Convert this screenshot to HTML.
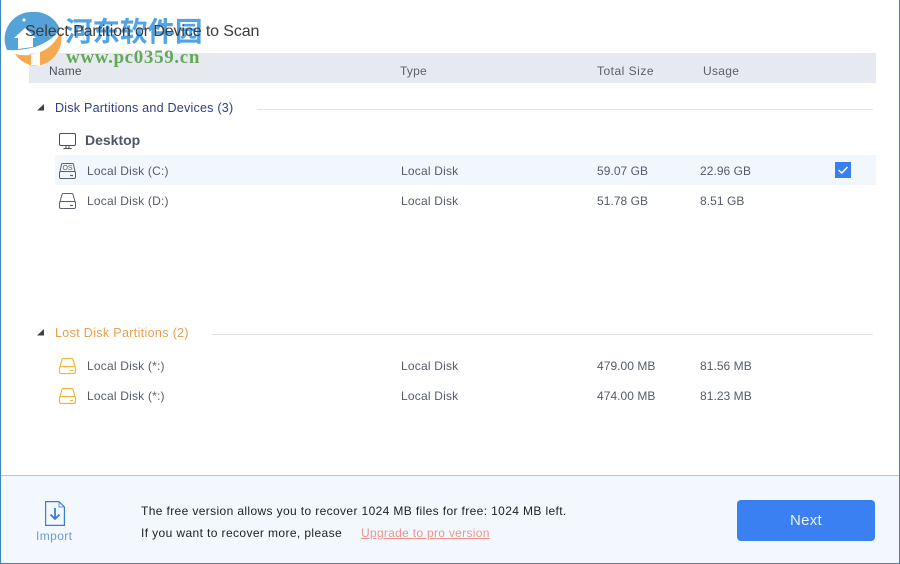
<!DOCTYPE html>
<html>
<head>
<meta charset="utf-8">
<style>
html,body{margin:0;padding:0;background:#fff}
#p{position:relative;width:900px;height:564px;overflow:hidden;background:#fff;font-family:"Liberation Sans","Noto Sans CJK SC",sans-serif}
.t{position:absolute;white-space:nowrap;font-size:12px;line-height:14px;color:#555b6b;letter-spacing:.2px}
.n{letter-spacing:.05px}
.h{font-size:12.6px;top:101px;letter-spacing:.2px}
.c{top:64px;color:#5a5f6b}
.b{position:absolute;background:#e6e9f0}
svg{position:absolute;overflow:visible}
</style>
</head>
<body>
<div id="p">
<div class="b" style="left:29px;top:53px;width:847px;height:30px"></div>
<div class="b" style="left:55px;top:155px;width:821px;height:30px;background:#f2f7fe"></div>
<div class="b" style="left:257px;top:109px;width:616px;height:1px;background:#e2e4e8"></div>
<div class="b" style="left:212px;top:334px;width:661px;height:1px;background:#e2e4e8"></div>

<svg style="left:0;top:0" width="70" height="70" viewBox="0 0 70 70">
<path d="M7 50A27 27 0 0 1 33 12A27 27 0 0 1 60 29Q52 41 35 47Q20 51 7 50Z" fill="#55a2d9"/>
<path d="M15 54Q27 57 38 53Q52 48 59 35L61 33A28 28 0 0 1 35 66A28 28 0 0 1 15 54Z" fill="#f6a950"/>
<path d="M14 38L25 28L36 38H33V47L18 49V38Z" fill="#fff"/>
<path d="M31 55L40 52V66L31 65Z" fill="#fff" opacity=".95"/>
<path d="M22 20L24 22L26 20L24 18Z" fill="#fff"/>
</svg>
<div class="t" style="left:65px;top:13px;font-size:27.5px;line-height:32px;font-weight:bold;color:#4fa3e8;letter-spacing:0;font-family:'Noto Sans CJK SC',sans-serif">河东软件园</div>
<div class="t" style="left:66px;top:48px;font-size:19px;line-height:20px;font-weight:bold;color:#62a95a;letter-spacing:.65px;font-family:'Liberation Serif',serif">www.pc0359.cn</div>
<div class="t" style="left:25px;top:23px;font-size:16px;line-height:18px;color:#3c3c3c;letter-spacing:-.12px">Select Partition or Device to Scan</div>

<div class="t c" style="left:49px;color:#4a4f5c">Name</div>
<div class="t c" style="left:400px">Type</div>
<div class="t c" style="left:597px;letter-spacing:.5px">Total Size</div>
<div class="t c" style="left:703px;letter-spacing:.3px">Usage</div>

<svg style="left:37px;top:104px" width="8" height="7"><path d="M0 6.5H7V0Z" fill="#3a3f4a"/></svg>
<div class="t h" style="left:55px;color:#2f3f85">Disk Partitions and Devices (3)</div>

<svg style="left:59px;top:133px" width="18" height="17" fill="none" stroke="#4a4f5c" stroke-width="1"><rect x=".5" y=".5" width="16" height="12" rx="1.5"/><path d="M7 13V15.5M10 13V15.5M4.5 15.5H12.5"/></svg>
<div class="t" style="left:85px;top:132px;font-size:14px;line-height:16px;font-weight:bold;color:#50556a;letter-spacing:0">Desktop</div>

<svg style="left:59px;top:163px" width="18" height="16" fill="none" stroke="#5a606b" stroke-width="1"><path d="M1 8.5L2.5 1.5Q2.7 .5 4 .5H13Q14.3 .5 14.5 1.5L16 8.5"/><rect x=".5" y="8.5" width="16" height="7" rx="1.5"/><text x="8.5" y="7" font-size="7" text-anchor="middle" fill="#5a606b" stroke="none" font-family="Liberation Sans">OS</text><path d="M11 12.5H14" stroke-width="1.2"/></svg>
<div class="t" style="left:87px;top:164px">Local Disk (C:)</div>
<div class="t" style="left:401px;top:164px">Local Disk</div>
<div class="t n" style="left:597px;top:164px">59.07 GB</div>
<div class="t n" style="left:700px;top:164px">22.96 GB</div>
<div class="b" style="left:835px;top:162px;width:16px;height:16px;background:#3a7ff0"></div>
<svg style="left:835px;top:162px" width="16" height="16" fill="none" stroke="#fff" stroke-width="1.5"><path d="M3.5 8L6.8 11L12.5 5"/></svg>

<svg style="left:59px;top:193px" width="18" height="16" fill="none" stroke="#5a606b" stroke-width="1"><path d="M1 8.5L3 1.5Q3.2 .5 4.5 .5H12.5Q13.8 .5 14 1.5L16 8.5"/><rect x=".5" y="8.5" width="16" height="7" rx="1.5"/><path d="M11 12.5H14" stroke-width="1.2"/></svg>
<div class="t" style="left:87px;top:194px">Local Disk (D:)</div>
<div class="t" style="left:401px;top:194px">Local Disk</div>
<div class="t n" style="left:597px;top:194px">51.78 GB</div>
<div class="t n" style="left:700px;top:194px">8.51 GB</div>

<svg style="left:37px;top:329px" width="8" height="7"><path d="M0 6.5H7V0Z" fill="#3a3f4a"/></svg>
<div class="t h" style="left:55px;top:326px;color:#e8a04e;letter-spacing:.3px">Lost Disk Partitions (2)</div>

<svg style="left:59px;top:358px" width="18" height="16" fill="none" stroke="#eeb83c" stroke-width="1.2"><path d="M1 8.5L3 1.5Q3.2 .5 4.5 .5H12.5Q13.8 .5 14 1.5L16 8.5"/><rect x=".5" y="8.5" width="16" height="7" rx="1.5"/><path d="M11 12.5H14" stroke-width="1.2"/></svg>
<div class="t" style="left:87px;top:359px">Local Disk (*:)</div>
<div class="t" style="left:401px;top:359px">Local Disk</div>
<div class="t n" style="left:597px;top:359px">479.00 MB</div>
<div class="t n" style="left:700px;top:359px">81.56 MB</div>

<svg style="left:59px;top:388px" width="18" height="16" fill="none" stroke="#eeb83c" stroke-width="1.2"><path d="M1 8.5L3 1.5Q3.2 .5 4.5 .5H12.5Q13.8 .5 14 1.5L16 8.5"/><rect x=".5" y="8.5" width="16" height="7" rx="1.5"/><path d="M11 12.5H14" stroke-width="1.2"/></svg>
<div class="t" style="left:87px;top:389px">Local Disk (*:)</div>
<div class="t" style="left:401px;top:389px">Local Disk</div>
<div class="t n" style="left:597px;top:389px">474.00 MB</div>
<div class="t n" style="left:700px;top:389px">81.23 MB</div>

<div class="b" style="left:0;top:475px;width:900px;height:89px;background:#f3f8fe"></div>
<div class="b" style="left:0;top:475px;width:900px;height:1px;background:#a9cbe2"></div>

<svg style="left:45px;top:501px" width="20" height="25" fill="none" stroke="#3a7be0" stroke-width="1.2"><path d="M.6 .6H14L19.4 6V24.4H.6Z"/><path d="M14 .6V6H19.4" stroke-width=".8"/><path d="M10 7V18M5.5 13.5L10 18L14.5 13.5" stroke-width="1.8"/></svg>
<div class="t" style="left:36px;top:529px;font-size:12px;color:#6b9ad6;letter-spacing:.4px">Import</div>

<div class="t" style="left:141px;top:504px;color:#222;letter-spacing:.37px">The free version allows you to recover 1024 MB files for free: 1024 MB left.</div>
<div class="t" style="left:141px;top:526px;color:#222;letter-spacing:.39px">If you want to recover more, please</div>
<div class="t" style="left:361px;top:526px;color:#f0958c;text-decoration:underline;letter-spacing:.3px">Upgrade to pro version</div>

<div class="b" style="left:737px;top:500px;width:138px;height:41px;background:#3a80f2;border-radius:4px"></div>
<div class="t" style="left:737px;top:512px;width:138px;text-align:center;font-size:15px;line-height:18px;color:#eaf3ff;letter-spacing:.3px">Next</div>

<div class="b" style="left:0;top:0;width:1px;height:564px;background:#3a86b8"></div>
<div class="b" style="left:899px;top:0;width:1px;height:564px;background:#3a86b8"></div>
<div class="b" style="left:0;top:563px;width:900px;height:1px;background:#3a86b8"></div>
</div>
</body>
</html>
